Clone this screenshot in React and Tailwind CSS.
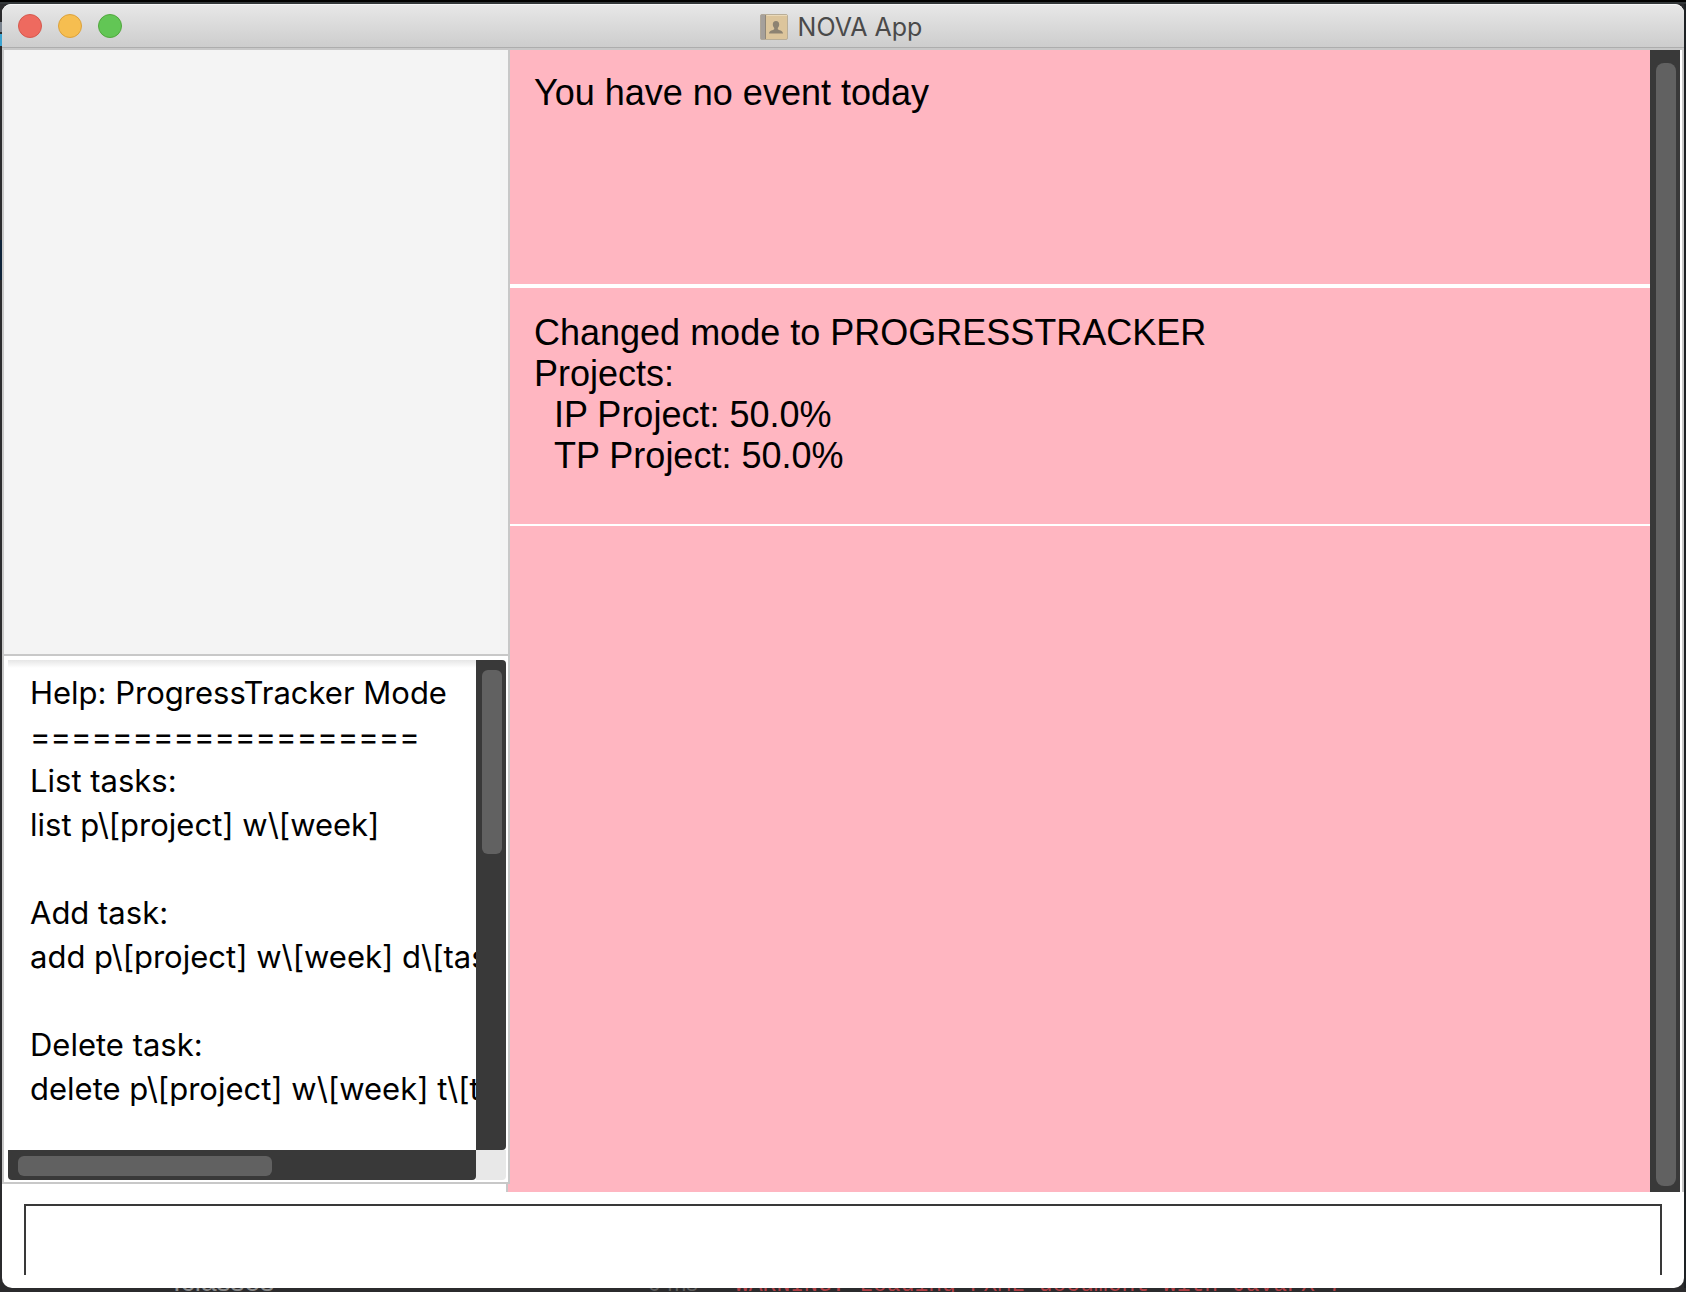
const help = [
  'Help: ProgressTracker Mode',
  '===================',
  'List tasks:',
  'list p\\[project] w\\[week]',
  '',
  'Add task:',
  'add p\\[project] w\\[week] d\\[task description]',
  '',
  'Delete task:',
  'delete p\\[project] w\\[week] t\\[task number]',
].join('\n');

function TitleBar() {
  return (
    <header className="flex h-11 shrink-0 items-center rounded-t-[9px] border-t border-b border-t-[#f6f6f6] border-b-[#adadad] bg-linear-to-b from-[#e7e7e7] to-[#cdcdcd] px-4">
      <div className="flex flex-1 gap-4">
        <button aria-label="Close" className="size-6 rounded-full border border-[#d5594e] bg-[#ee6a5f]" />
        <button aria-label="Minimize" className="size-6 rounded-full border border-[#dca23c] bg-[#f6be50]" />
        <button aria-label="Zoom" className="size-6 rounded-full border border-[#51a73d] bg-[#62c655]" />
      </div>
      <div className="flex items-center gap-2.5 pt-0.5 pr-1">
        <svg viewBox="0 0 28 26" className="h-[26px] w-7" aria-hidden="true">
          <rect x="0.5" y="0.5" width="27" height="25" rx="1.5" fill="#dcc59c" stroke="#b9ae98" />
          <rect x="0.5" y="0.5" width="4.500" height="25" rx="1" fill="#a5a09b" />
          <path d="M5.500 1v24" stroke="#8f8678" />
          <path d="M6.500 1.500h20.500" stroke="#ead9b8" />
          <path d="M16 7c2.200 0 3.200 1.500 3.200 3.500 0 1.600-.7 2.700-1.400 3.400v1.300c.8 1 5.200 1 5.200 4.300H9c0-3.300 4.400-3.300 5.200-4.300v-1.300c-.7-.7-1.400-1.800-1.400-3.400C12.800 8.500 13.800 7 16 7z" fill="#8d8372" />
        </svg>
        <h1 className="font-['Inter',sans-serif] text-[25px] leading-8 text-[#4a4a4a]">NOVA App</h1>
      </div>
      <div className="flex-1" />
    </header>
  );
}

function HelpPanel() {
  return (
    <section aria-label="Help" className="grid h-[526px] shrink-0 grid-cols-[minmax(0,1fr)_30px] grid-rows-[minmax(0,1fr)_30px] bg-white pt-1 pr-0.5 pb-0.5 pl-1">
      <div className="overflow-hidden bg-linear-to-b from-[#e6e6e6] to-white to-[8px] pt-[11px] pl-[22px]">
        <pre className="font-['Inter',sans-serif] text-[31px] leading-[44px] text-black">{help}</pre>
      </div>
      <div className="rounded-r-[4px] bg-[#393939] py-2.5 pr-1 pl-1.5">
        <div className="h-[184px] rounded-md bg-[#616161]" />
      </div>
      <div className="rounded-b-[4px] bg-[#393939] px-2.5 py-1.5">
        <div className="h-5 w-[254px] rounded-md bg-[#616161]" />
      </div>
      <div className="rounded-br-[4px] bg-[#e8e8e8]" />
    </section>
  );
}

export default function App() {
  return (
    <div className="flex min-h-screen flex-col bg-[#2b2b2d]">
      <div className="h-1 shrink-0 border-b-2 border-[#333739] bg-black" />
      <div className="flex flex-1">
        <div className="w-0.5 shrink-0 pt-[18px]">
          <div className="h-2.5 bg-[#7a838e]" />
          <div className="mt-0.5 h-3 bg-[#3ba3d0]" />
          <div className="mt-[194px] h-10 bg-[#0d2238]" />
        </div>
        <div className="flex min-w-0 flex-1 flex-col rounded-t-[9px] rounded-b-[10px] bg-white">
          <TitleBar />
          <main className="flex flex-1 border-t-2 border-[#c8c8c8]">
            <div className="flex w-[508px] shrink-0 flex-col">
              <div className="flex flex-1 flex-col border-x-2 border-b-2 border-[#c8c8c8]">
                <div className="flex-1 border-b-2 border-[#c8c8c8] bg-[#f4f4f4]" />
                <HelpPanel />
              </div>
              <div className="ml-auto h-2 w-1 border-l-2 border-[#c8c8c8] bg-[#ffb6c1]" />
            </div>
            <div className="flex min-w-0 flex-1 border-r-2 border-[#c8c8c8]">
              <div className="min-w-0 flex-1 bg-[#ffb6c1] font-['Liberation_Sans',sans-serif] text-[36px] leading-[41px] text-black">
                <section className="h-[238px] border-b-4 border-white px-6 pt-[22px]">
                  <p>You have no event today</p>
                </section>
                <section className="h-[238px] border-b-2 border-white px-6 pt-6">
                  <p>Changed mode to PROGRESSTRACKER</p>
                  <p>Projects:</p>
                  <ul className="pl-5">
                    <li>IP Project: 50.0%</li>
                    <li>TP Project: 50.0%</li>
                  </ul>
                </section>
              </div>
              <div className="mr-0.5 flex w-[30px] shrink-0 bg-[#393939] pt-[13px] pr-1 pb-1.5 pl-1.5">
                <div className="flex-1 rounded-lg bg-[#616161]" />
              </div>
            </div>
          </main>
          <footer className="h-24 shrink-0 px-[22px] pt-3">
            <input aria-label="Command" className="h-[71px] w-full border-2 border-b-0 border-[#393939] bg-white px-4 font-['Liberation_Sans',sans-serif] text-[36px] outline-none" />
          </footer>
        </div>
        <div className="w-0.5 shrink-0 bg-[#1d2124]" />
      </div>
      <div className="flex h-1 shrink-0 items-end overflow-hidden pl-[173px] text-[#8a8a8a]">
        <span className="-mb-px w-[475px] font-['Liberation_Sans',sans-serif] text-[28px] leading-[23px]">.classes</span>
        <span className="-mb-[3px] w-[87px] font-['Liberation_Sans',sans-serif] text-[23px] leading-[23px] text-[#5c5c5c]">0 ms</span>
        <span className="-mb-[5px] font-['Liberation_Mono',monospace] text-[23px] leading-[23px] whitespace-nowrap text-[#b04046]">WARNING: Loading FXML document with JavaFX 7</span>
      </div>
    </div>
  );
}
